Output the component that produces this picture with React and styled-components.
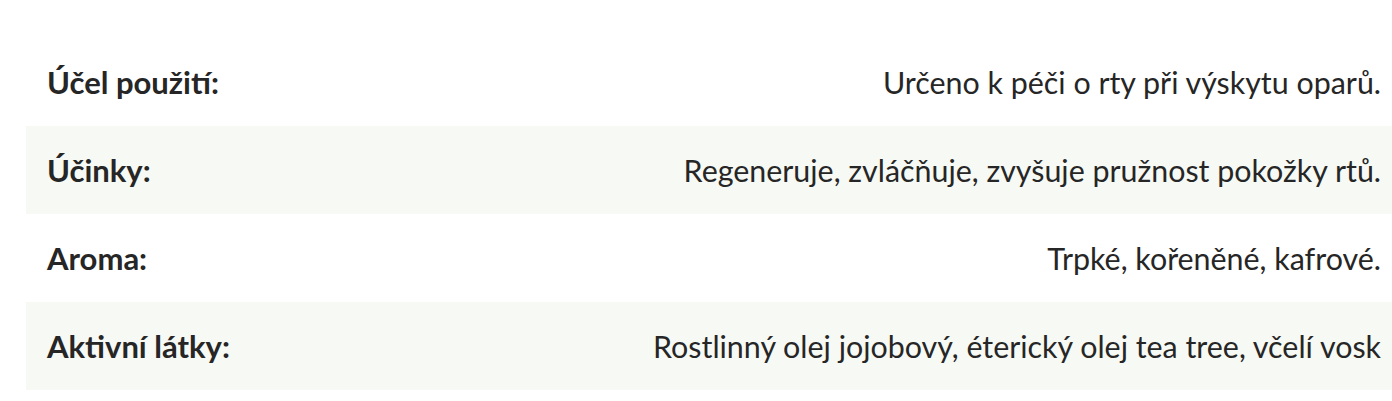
import React from "react";
import styled, { createGlobalStyle } from "styled-components";

const GlobalStyle = createGlobalStyle`
  body {
    margin: 0;
    background: #fff;
    font-family: "Lato", "Noto Sans", sans-serif;
    color: #262626;
  }
`;

const Wrapper = styled.div`
  padding: 38px 0 0 26px;
`;

const Table = styled.div`
  display: flex;
  flex-direction: column;
`;

const Row = styled.div`
  display: flex;
  align-items: center;
  justify-content: space-between;
  height: 88px;
  padding: 0 11px 0 21px;
  background: ${(props) => (props.$shaded ? "#f7f9f4" : "#fff")};
`;

const Label = styled.span`
  font-size: 31px;
  font-weight: 700;
`;

const Value = styled.span`
  font-size: 30.4px;
  font-weight: 400;
  text-align: right;
`;

const rows = [
  ["Účel použití:", "Určeno k péči o rty při výskytu oparů."],
  ["Účinky:", "Regeneruje, zvláčňuje, zvyšuje pružnost pokožky rtů."],
  ["Aroma:", "Trpké, kořeněné, kafrové."],
  ["Aktivní látky:", "Rostlinný olej jojobový, éterický olej tea tree, včelí vosk"],
];

const App = () => {
  return (
    <Wrapper>
      <GlobalStyle />
      <Table>
        {rows.map(([label, value], i) => (
          <Row key={label} $shaded={i % 2 === 1}>
            <Label>{label}</Label>
            <Value>{value}</Value>
          </Row>
        ))}
      </Table>
    </Wrapper>
  );
};

export default App;
